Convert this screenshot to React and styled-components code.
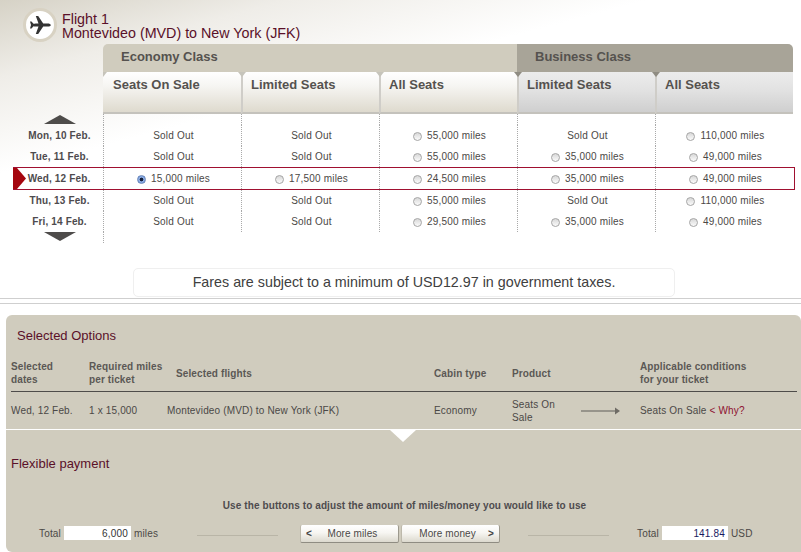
import styled, { createGlobalStyle } from 'styled-components';

const GlobalStyle = createGlobalStyle`
  html, body {
    margin: 0;
    padding: 0;
    background: #fff;
    overflow: hidden;
    font-family: "Liberation Sans", Arial, sans-serif;
  }
`;

const Page = styled.div`
  width: 801px;
  height: 552px;
  overflow: hidden;
  display: flex;
  flex-direction: column;
`;

const Top = styled.section`
  height: 268px;
  flex: none;
  background: linear-gradient(165deg, #d6d2c6 0%, #efede8 16%, #fff 36%);
`;

const FlightHead = styled.header`
  height: 44px;
  padding: 8px 0 0 23px;
  box-sizing: border-box;
  display: flex;
  gap: 5px;
`;

const PlaneBadge = styled.svg`
  width: 34px;
  height: 34px;
  flex: none;
`;

const FlightTitle = styled.h1`
  margin: 4px 0 0;
  font-size: 14.3px;
  line-height: 14px;
  font-weight: 400;
  color: #5a1029;
`;

const ClassBar = styled.div`
  margin-left: 103px;
  width: 690px;
  height: 28px;
  display: grid;
  grid-template-columns: 414px 276px;
`;

const ClassTab = styled.div`
  padding: 5px 0 0 18px;
  font-size: 13px;
  font-weight: 700;
  color: #55524f;
  background: ${p => (p.$business ? '#a8a498' : '#d0ccbe')};
  border-radius: ${p => (p.$business ? '0 5px 0 0' : '5px 0 0 0')};
`;

const ColumnBar = styled.div`
  margin-left: 103px;
  width: 690px;
  height: 42px;
  display: grid;
  grid-template-columns: repeat(5, 138px);
`;

const ColumnHead = styled.div`
  position: relative;
  box-sizing: border-box;
  padding: 5px 0 0 ${p => (p.$first ? 10 : 8)}px;
  font-size: 13px;
  font-weight: 700;
  color: #55524f;
  background: ${p =>
    p.$business
      ? 'linear-gradient(#ececec 0%, #e2e2e2 45%, #cfcfcf 100%)'
      : 'linear-gradient(#fff 0%, #f6f5f2 35%, #dedace 100%)'};
  border-left: ${p => (p.$first ? 0 : '2px solid #cfcdc8')};
  border-bottom: 2px solid #c4c2bc;
  &::before {
    content: '';
    position: absolute;
    top: 0;
    left: ${p => (p.$first ? 0 : -5)}px;
    border-style: solid;
    border-width: 5px ${p => (p.$first ? '4px 0 0' : '4px 0')};
    border-color: ${p => (p.$business ? '#8f8c82' : '#c6c4bb')} transparent transparent;
  }
`;

const Row = styled.div`
  position: relative;
  margin-left: 13px;
  width: ${p => (p.$selected ? '782px' : '780px')};
  height: ${p => p.$h}px;
  box-sizing: border-box;
  display: grid;
  grid-template-columns: 90px repeat(5, 138px);
  align-items: stretch;
  ${p => p.$selected && 'border: 1px solid #a01030; border-left: 0;'}
`;

const DayCell = styled.div`
  display: flex;
  align-items: center;
  justify-content: center;
  padding-left: ${p => (p.$selected ? 2 : 3)}px;
  font-size: 10px;
  font-weight: 700;
  letter-spacing: 0.15px;
  color: #4e4b4e;
  white-space: nowrap;
`;

const FareCell = styled.div`
  display: flex;
  align-items: center;
  justify-content: center;
  gap: 5px;
  padding-left: 2px;
  font-size: 10px;
  letter-spacing: 0.2px;
  color: #4b4846;
  border-left: 1px dotted #a9a9a9;
  white-space: nowrap;
`;

const Radio = styled.span`
  width: 9px;
  height: 9px;
  margin-top: 2px;
  flex: none;
  border-radius: 50%;
  box-sizing: border-box;
  border: 1px solid ${p => (p.$checked ? '#6a86b8' : '#a5a5a5')};
  background: ${p =>
    p.$checked
      ? 'radial-gradient(circle, #14203c 0 1.6px, #8fb0e6 2.2px, #6f97dc 100%)'
      : 'linear-gradient(#d8d8d8, #fbfbfb)'};
`;

const SelectedFlag = styled.span`
  position: absolute;
  left: 0;
  top: 0;
  bottom: 0;
  width: 13px;
  background: #a5060f;
  clip-path: polygon(0 0, 4px 0, 13px 50%, 4px 100%, 0 100%);
`;

const Triangle = styled.span`
  width: 0;
  height: 0;
  border-left: 16px solid transparent;
  border-right: 16px solid transparent;
  ${p => (p.$down ? 'border-top: 9px solid #4e4c4a;' : 'border-bottom: 9px solid #4e4c4a;')}
`;

const ArrowCell = styled.div`
  display: flex;
  justify-content: center;
  padding: ${p => (p.$down ? '0 0 0 4px' : '1px 0 0 4px')};
`;

const Notice = styled.div`
  width: 542px;
  height: 29px;
  margin: 0 0 0 133px;
  box-sizing: border-box;
  border: 1px solid #efefef;
  border-radius: 5px;
  background: #fff;
  font-size: 14.3px;
  line-height: 26px;
  text-align: center;
  color: #404040;
`;

const Rules = styled.div`
  margin-top: 1px;
  height: 4px;
  flex: none;
  border-top: 1px solid #cfcfcf;
  border-bottom: 1px solid #cfcfcf;
`;

const Panel = styled.section`
  margin: 11px 0 0 6px;
  flex: 1;
  background: #d0ccbe;
  border-radius: 6px 6px 0 6px;
  font-size: 10px;
  letter-spacing: 0.16px;
  color: #4b4846;
`;

const PanelTitle = styled.h2`
  margin: 0;
  padding: ${p => p.$pad};
  font-size: 13px;
  line-height: 14px;
  font-weight: 400;
  letter-spacing: 0;
  color: #5a1029;
`;

const SummaryHead = styled.div`
  margin: 0 4px 0 5px;
  height: 36px;
  padding-top: 2px;
  display: grid;
  grid-template-columns: 78px 87px 258px 78px 128px 1fr;
  align-items: center;
  border-bottom: 1px solid #4e4c4a;
  font-weight: 700;
  letter-spacing: 0.12px;
  line-height: 13px;
  color: #5b5855;
`;

const SummaryRow = styled.div`
  margin: 0 4px 0 5px;
  height: 37px;
  display: grid;
  grid-template-columns: 78px 87px 258px 78px 128px 1fr;
  align-items: center;
  line-height: 13px;
`;

const FlightCell = styled.div`
  margin-left: -9px;
  white-space: nowrap;
`;

const ProductCell = styled.div`
  display: flex;
  align-items: center;
  gap: 19px;
`;

const ProductName = styled.div`
  width: 50px;
`;

const WhyLink = styled.span`
  color: #8e1030;
`;

const Divider = styled.div`
  position: relative;
  height: 1px;
  background: #fff;
  &::after {
    content: '';
    position: absolute;
    top: 1px;
    left: 384px;
    border-left: 13px solid transparent;
    border-right: 13px solid transparent;
    border-top: 12px solid #fff;
  }
`;

const AdjustHint = styled.div`
  margin-top: 28px;
  padding-left: 2px;
  text-align: center;
  font-weight: 700;
  letter-spacing: 0.1px;
  line-height: 13px;
  color: #4e4b4e;
`;

const PayRow = styled.div`
  margin-top: 13px;
  display: flex;
  align-items: center;
`;

const TotalGroup = styled.div`
  display: flex;
  align-items: center;
  gap: 3px;
  width: ${p => p.$w}px;
  margin-left: ${p => p.$left}px;
  padding-bottom: 2px;
`;

const TotalValue = styled.div`
  width: ${p => p.$w}px;
  height: 14px;
  box-sizing: border-box;
  padding-right: 3px;
  background: #fff;
  text-align: right;
  line-height: 15px;
  color: ${p => p.$color};
`;

const Buttons = styled.div`
  display: flex;
  gap: 2px;
  margin: 0 28px 0 22px;
`;

const MoveButton = styled.button`
  width: 99px;
  height: 18px;
  padding: 0 5px;
  display: flex;
  align-items: center;
  justify-content: space-between;
  font: inherit;
  letter-spacing: 0.1px;
  color: #4b4846;
  border: 0;
  border-bottom: 1px solid #8f8c82;
  border-left: 1px solid #bdb9ab;
  border-right: 1px solid #9c998d;
  border-radius: 2px;
  background: linear-gradient(#fff 0%, #f7f6f2 45%, #dcd9ce 100%);
`;

const Chevron = styled.b`
  font-size: 10px;
  color: #444;
`;

const Stretch = styled.span`
  flex: 1;
  text-align: center;
`;

const Rule = styled.div`
  width: 81px;
  height: 1px;
  margin-top: 2px;
  flex: none;
  background: #b9b5a7;
`;

const days = [
  { day: 'Mon, 10 Feb.', h: 21, fares: [null, null, '55,000', null, '110,000'] },
  { day: 'Tue, 11 Feb.', h: 21, fares: [null, null, '55,000', '35,000', '49,000'] },
  { day: 'Wed, 12 Feb.', h: 23, selected: true, fares: ['15,000', '17,500', '24,500', '35,000', '49,000'] },
  { day: 'Thu, 13 Feb.', h: 21, fares: [null, null, '55,000', null, '110,000'] },
  { day: 'Fri, 14 Feb.', h: 21, fares: [null, null, '29,500', '35,000', '49,000'] },
];

function PlaneIcon() {
  return (
    <PlaneBadge viewBox="0 0 34 34">
      <circle cx="17" cy="17" r="15.5" fill="#fff" stroke="#d8d2c3" strokeWidth="3" />
      <path
        fill="#333"
        d="M7 13.500h1.500l2 2.300c1-.3 3-.4 5-.4L12.800 8h2.400l5 7.400h4.400c1.800 0 3.200.7 3.200 1.600s-1.400 1.600-3.200 1.600h-4.400l-5 7.400h-2.400l2.700-7.400c-2 0-4-.1-5-.4l-2 2.300H7l1-3.500z"
      />
    </PlaneBadge>
  );
}

function ArrowRow({ down }) {
  return (
    <Row $h={11}>
      <ArrowCell $down={down}><Triangle $down={down} /></ArrowCell>
      <FareCell />
      {!down && <FareCell />}
      {!down && <FareCell />}
      {!down && <FareCell />}
      {!down && <FareCell />}
    </Row>
  );
}

export default function App() {
  return (
    <Page>
      <GlobalStyle />
      <Top>
        <FlightHead>
          <PlaneIcon />
          <FlightTitle>
            Flight 1<br />
            Montevideo (MVD) to New York (JFK)
          </FlightTitle>
        </FlightHead>
        <ClassBar>
          <ClassTab>Economy Class</ClassTab>
          <ClassTab $business>Business Class</ClassTab>
        </ClassBar>
        <ColumnBar>
          <ColumnHead $first>Seats On Sale</ColumnHead>
          <ColumnHead>Limited Seats</ColumnHead>
          <ColumnHead>All Seats</ColumnHead>
          <ColumnHead $business>Limited Seats</ColumnHead>
          <ColumnHead $business>All Seats</ColumnHead>
        </ColumnBar>
        <ArrowRow />
        {days.map(d => (
          <Row key={d.day} $h={d.h} $selected={d.selected}>
            {d.selected && <SelectedFlag />}
            <DayCell $selected={d.selected}>{d.day}</DayCell>
            {d.fares.map((fare, i) => (
              <FareCell key={i}>
                {fare ? (
                  <>
                    <Radio $checked={d.selected && i === 0} />
                    {fare} miles
                  </>
                ) : (
                  'Sold Out'
                )}
              </FareCell>
            ))}
          </Row>
        ))}
        <ArrowRow down />
      </Top>
      <Notice>Fares are subject to a minimum of USD12.97 in government taxes.</Notice>
      <Rules />
      <Panel>
        <PanelTitle $pad="14px 0 10px 11px">Selected Options</PanelTitle>
        <SummaryHead>
          <div>Selected<br />dates</div>
          <div>Required miles<br />per ticket</div>
          <div>Selected flights</div>
          <div>Cabin type</div>
          <div>Product</div>
          <div>Applicable conditions<br />for your ticket</div>
        </SummaryHead>
        <SummaryRow>
          <div>Wed, 12 Feb.</div>
          <div>1 x 15,000</div>
          <FlightCell>Montevideo (MVD) to New York (JFK)</FlightCell>
          <div>Economy</div>
          <ProductCell>
            <ProductName>Seats On Sale</ProductName>
            <svg width="40" height="8" viewBox="0 0 40 8">
              <path d="M0 4h34" stroke="#85827a" strokeWidth="1.500" />
              <path d="M34 0.500l5 3.500-5 3.500z" fill="#6e6b65" />
            </svg>
          </ProductCell>
          <div>Seats On Sale <WhyLink>&lt; Why?</WhyLink></div>
        </SummaryRow>
        <Divider />
        <PanelTitle $pad="27px 0 0 5px">Flexible payment</PanelTitle>
        <AdjustHint>Use the buttons to adjust the amount of miles/money you would like to use</AdjustHint>
        <PayRow>
          <TotalGroup $left={33} $w={158}>
            Total
            <TotalValue $w={67} $color="#333">6,000</TotalValue>
            miles
          </TotalGroup>
          <Rule />
          <Buttons>
            <MoveButton><Chevron>&lt;</Chevron><Stretch>More miles</Stretch></MoveButton>
            <MoveButton><Stretch>More money</Stretch><Chevron>&gt;</Chevron></MoveButton>
          </Buttons>
          <Rule />
          <TotalGroup $left={28} $w={120}>
            Total
            <TotalValue $w={66} $color="#1a1a60">141.84</TotalValue>
            USD
          </TotalGroup>
        </PayRow>
      </Panel>
    </Page>
  );
}
